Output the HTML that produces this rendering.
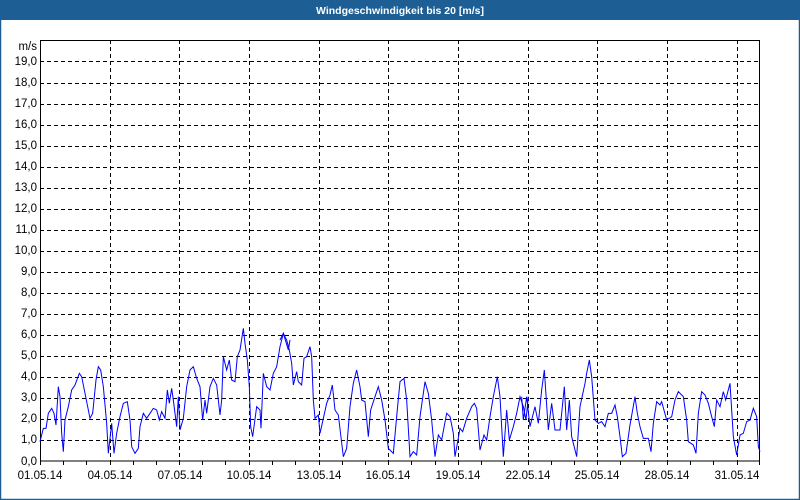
<!DOCTYPE html>
<html><head><meta charset="utf-8"><style>
html,body{margin:0;padding:0;width:800px;height:500px;overflow:hidden;background:#fff}
</style></head><body>
<svg width="800" height="500" xmlns="http://www.w3.org/2000/svg" style="display:block;font-family:'Liberation Sans',sans-serif">
<rect x="0" y="0" width="800" height="500" fill="#fff"/>
<rect x="0.5" y="0.5" width="799" height="499" fill="none" stroke="#1d5e94" stroke-width="1.5"/>
<rect x="0" y="0" width="800" height="20" fill="#1d5e94"/>
<text x="400" y="14" text-anchor="middle" fill="#fff" font-weight="bold" font-size="10.5">Windgeschwindigkeit bis 20 [m/s]</text>
<g stroke="#000" stroke-width="1" stroke-dasharray="4,3" fill="none">
<path d="M40 440.5H760M40 419.5H760M40 398.5H760M40 377.5H760M40 356.5H760M40 335.5H760M40 314.5H760M40 293.5H760M40 272.5H760M40 251.5H760M40 230.5H760M40 209.5H760M40 188.5H760M40 167.5H760M40 146.5H760M40 125.5H760M40 104.5H760M40 83.5H760M40 61.5H760"/>
<path d="M110.5 40V461M179.5 40V461M249.5 40V461M319.5 40V461M388.5 40V461M458.5 40V461M528.5 40V461M597.5 40V461M667.5 40V461M737.5 40V461"/>
</g>
<rect x="40.5" y="40.5" width="719" height="420.5" fill="none" stroke="#000" stroke-width="1"/>
<path stroke="#000" stroke-width="1" d="M40.5 461V465M63.5 461V465M86.5 461V465M110.5 461V465M133.5 461V465M156.5 461V465M179.5 461V465M202.5 461V465M225.5 461V465M249.5 461V465M272.5 461V465M295.5 461V465M319.5 461V465M342.5 461V465M365.5 461V465M388.5 461V465M411.5 461V465M435.5 461V465M458.5 461V465M481.5 461V465M504.5 461V465M528.5 461V465M551.5 461V465M574.5 461V465M597.5 461V465M620.5 461V465M644.5 461V465M667.5 461V465M690.5 461V465M713.5 461V465M737.5 461V465M759.5 461V465"/>
<g font-size="11.5" fill="#000" text-anchor="end">
<text x="37" y="50">m/s</text>
<text x="37" y="65">19,0</text><text x="37" y="86">18,0</text><text x="37" y="107">17,0</text><text x="37" y="128">16,0</text><text x="37" y="149">15,0</text><text x="37" y="170">14,0</text><text x="37" y="191">13,0</text><text x="37" y="212">12,0</text><text x="37" y="233">11,0</text><text x="37" y="254">10,0</text><text x="37" y="275">9,0</text><text x="37" y="296">8,0</text><text x="37" y="317">7,0</text><text x="37" y="338">6,0</text><text x="37" y="359">5,0</text><text x="37" y="380">4,0</text><text x="37" y="401">3,0</text><text x="37" y="422">2,0</text><text x="37" y="443">1,0</text><text x="37" y="465">0,0</text>
</g>
<g font-size="11.5" fill="#000" text-anchor="middle">
<text x="40" y="479">01.05.14</text><text x="110" y="479">04.05.14</text><text x="180" y="479">07.05.14</text><text x="249" y="479">10.05.14</text><text x="319" y="479">13.05.14</text><text x="388" y="479">16.05.14</text><text x="458" y="479">19.05.14</text><text x="528" y="479">22.05.14</text><text x="597" y="479">25.05.14</text><text x="667" y="479">28.05.14</text><text x="737" y="479">31.05.14</text>
</g>
<g fill="none" stroke="#0000ff" stroke-width="1">
<g transform="translate(40,320) scale(0.33333)">
<polyline vector-effect="non-scaling-stroke" points="0,365 10,325 18,325 25,280 35,265 42,280 48,315 55,200 60,230 65,340 70,395 75,300 85,260 95,210 105,195 118,160 125,170 135,220 150,295 158,280 168,180 175,140 182,150 190,200 200,310 205,400 215,310 222,400 230,340 240,290 250,250 262,245 270,300 275,380 285,400 295,385 300,320 310,280 320,295 330,280 340,265 350,270 358,300 365,275 375,295 382,210 388,250 395,205 400,240 410,320 415,230 420,330 430,295 440,200 450,150 460,140 470,175 480,200 488,300 495,240 500,280 510,200 520,175 530,195 540,285 545,240 550,110 560,150 568,120 575,180 585,185 592,110 600,90 610,25 615,70 622,120 628,200 632,320 638,350 650,260 660,270 663,325 670,160 680,200 690,210 700,160 710,140 720,80 730,40 745,90 750,60"/>
</g>
<g transform="translate(280,320) scale(0.33333)">
<polyline vector-effect="non-scaling-stroke" points="0,60 10,40 20,60 28,90 35,130 40,195 50,155 55,185 65,195 72,115 80,110 90,80 95,110 100,240 105,295 115,285 120,340 130,295 140,250 150,225 157,195 165,270 175,285 190,410 200,385 210,260 220,190 230,150 240,200 245,240 255,245 265,350 272,270 285,230 295,200 305,240 315,300 325,385 340,400 350,290 360,185 372,175 380,240 390,410 400,395 410,405 420,290 435,185 445,220 455,300 465,410 475,345 485,360 500,280 510,290 520,340 525,410 540,325 548,335 560,295 575,260 583,250 590,265 600,390 612,345 620,360 630,290 640,230 652,170 660,230 670,410 680,270 688,360 700,320 710,280 720,230 730,260 738,300 745,230"/>
</g>
<g transform="translate(520,320) scale(0.33333)">
<polyline vector-effect="non-scaling-stroke" points="5,230 10,300 20,230 30,320 45,260 55,310 65,210 73,150 85,330 95,250 105,330 120,330 133,200 140,330 148,240 155,350 170,410 180,260 195,190 200,160 208,120 215,170 225,300 235,310 245,305 255,320 265,280 275,280 285,255 292,290 300,350 307,410 318,400 330,315 345,230 352,280 360,320 370,355 385,355 393,395 400,310 410,245 420,255 425,245 440,300 455,290 465,240 475,215 490,230 500,300 505,365 520,375 528,400 535,280 545,215 555,225 565,250 575,290 583,320 590,240 600,260 610,215 617,240 630,190 640,350 650,405 660,345 670,340 680,305 690,300 700,265 710,290 715,380 720,395"/>
</g>
</g>
</svg>
</body></html>
